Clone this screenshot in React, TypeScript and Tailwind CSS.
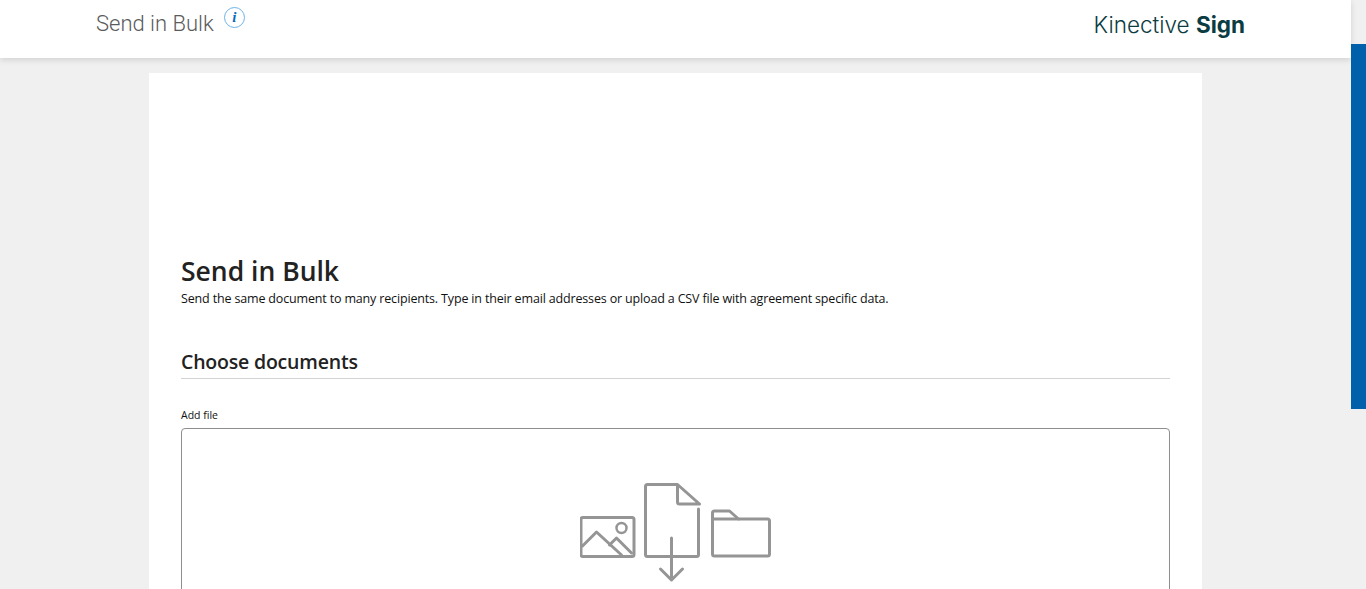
export default function App() {
  return (
    <div className="flex h-[589px] overflow-hidden bg-[#f0f0f0]">
      <div className="flex min-w-0 flex-1 flex-col">
        {/* Header */}
        <header className="flex h-[58px] shrink-0 justify-between bg-white pl-[96px] pr-[106px] shadow-[0_2px_6px_rgba(0,0,0,0.13)]">
          <div className="flex items-start">
            <h1 className="mt-[10px] font-['Roboto',sans-serif] text-[22px] font-light leading-[28px] text-[#5b5b5b]">
              Send in Bulk
            </h1>
            <span className="ml-[10px] mt-[7px] flex h-[21px] w-[21px] items-center justify-center rounded-full border border-[#6db3e8] font-['Liberation_Serif',serif] text-[15px] font-bold italic leading-none text-[#0b6cb8]">
              i
            </span>
          </div>
          <div className="mt-[11px] font-['Inter',sans-serif] text-[22.5px] font-light leading-[28px] text-[#0b3c42]">
            Kinective <span className="font-bold">Sign</span>
          </div>
        </header>

        {/* Main content */}
        <main className="mx-auto mt-[15px] w-[1053px] flex-1 bg-white px-8 pt-[181px]">
          <h2 className="font-['Open_Sans',sans-serif] text-[26.5px] font-semibold leading-[34px] text-[#222222]">
            Send in Bulk
          </h2>
          <p className="mt-[3px] font-['Open_Sans',sans-serif] text-[12.5px] leading-[16px] tracking-[-0.16px] text-[#111111]">
            Send the same document to many recipients. Type in their email addresses or upload a CSV file with agreement specific data.
          </p>
          <h3 className="mt-[41px] border-b border-[#d3d3d3] pb-[2px] font-['Open_Sans',sans-serif] text-[19.5px] font-semibold leading-[28px] tracking-[-0.2px] text-[#222222]">
            Choose documents
          </h3>
          <label className="mt-[29px] block font-['Open_Sans',sans-serif] text-[10.5px] font-medium leading-[14px] text-[#111111]">
            Add file
          </label>
          <div className="mt-[6px] flex h-[300px] justify-center rounded-t-[4px] border border-[#8e8e8e] pt-[54px]">
            <svg width="192" height="100" viewBox="0.5 0 192 100" fill="none" stroke="#959595" strokeWidth="3" strokeLinejoin="round" strokeLinecap="round">
              <rect x="1.5" y="34.5" width="53" height="39" rx="2" />
              <path d="M3 63 L17 49 L42 72" />
              <path d="M30 62 L37 55 L52 70" />
              <circle cx="42" cy="45" r="5" strokeWidth="2.5" />
              <path d="M66 27 V71.5 Q66 73.5 68 73.5 H117 Q119 73.5 119 71.5 V26" />
              <path d="M66 27 V3.5 Q66 1.5 68 1.5 H98 L120 21 H100 Q98 21 98 19 V1.5" />
              <path d="M92 55 V97 M81 86 L92 97 L103 86" />
              <path d="M133 71 V30 Q133 28 135 28 H150 L159 36 H188 Q190 36 190 38 V71 Q190 73 188 73 H135 Q133 73 133 71 Z" />
              <path d="M133 36 H159" />
            </svg>
          </div>
        </main>
      </div>

      {/* Scrollbar */}
      <div className="w-[15px] shrink-0 pt-[44px]">
        <div className="h-[365px] bg-[#0060a9]" />
      </div>
    </div>
  );
}
